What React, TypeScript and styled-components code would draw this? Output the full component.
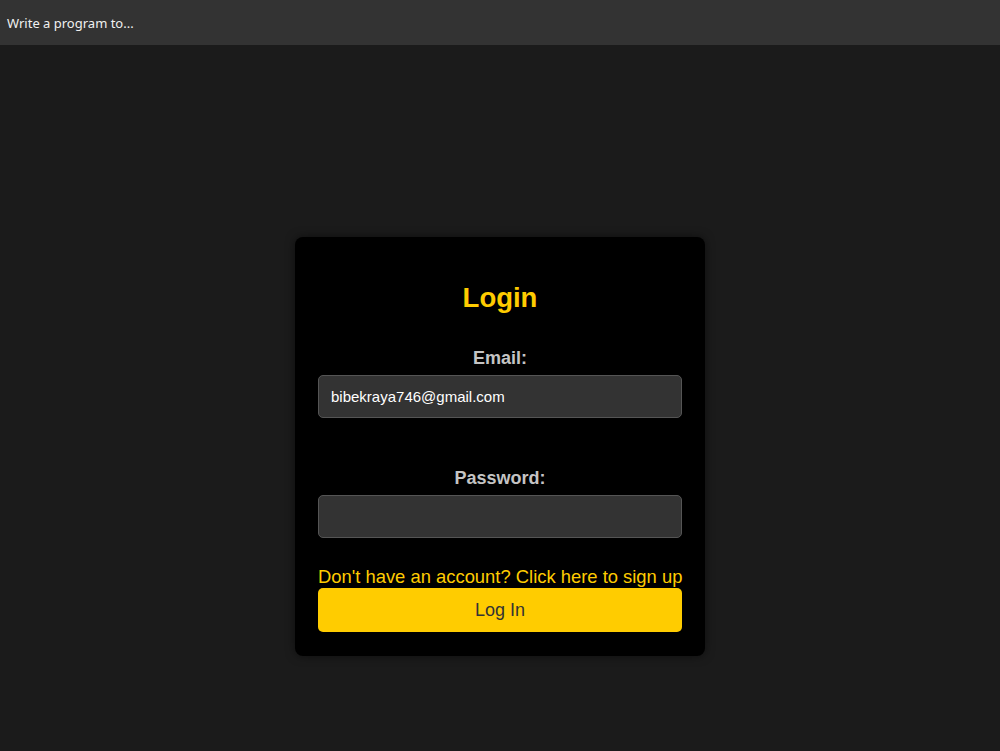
import React from 'react';
import styled, { createGlobalStyle } from 'styled-components';

const GlobalStyle = createGlobalStyle`
  body {
    margin: 0;
    background: #1b1b1b;
    font-family: "Liberation Sans", Arial, sans-serif;
  }
`

const TopBar = styled.div`
  height: 45px;
  background: #333333;
  display: flex;
  align-items: center;
  padding: 0 7px;
  color: #f0f0f0;
  font-family: "Noto Sans", "Open Sans", sans-serif;
  font-size: 13px;
`

const Main = styled.main`
  display: flex;
  justify-content: center;
  padding-top: 192px;
  min-height: 706px;
  box-sizing: border-box;
`

const Card = styled.form`
  width: 410px;
  box-sizing: border-box;
  background: #000;
  border-radius: 8px;
  box-shadow: 0 0 10px rgba(0, 0, 0, 0.5);
  padding: 22px 23px 24px;
  display: flex;
  flex-direction: column;
  align-self: flex-start;
`

const Title = styled.h2`
  margin: 24px 0 0;
  text-align: center;
  color: #ffcc00;
  font-size: 27.5px;
  line-height: 30px;
  font-weight: bold;
`

const Label = styled.label<{ $top: number }>`
  display: block;
  margin-top: ${p => p.$top}px;
  text-align: center;
  color: #c4c4c4;
  font-size: 18px;
  line-height: 21px;
  font-weight: bold;
`

const Input = styled.input`
  margin-top: 6px;
  height: 43px;
  box-sizing: border-box;
  width: 100%;
  background: #333333;
  border: 1px solid #555;
  border-radius: 5px;
  padding: 0 12px;
  color: #fff;
  font-family: "Liberation Sans", Arial, sans-serif;
  font-size: 15px;
  outline: none;
`

const SignUp = styled.a`
  margin-top: 28px;
  color: #ffcc00;
  font-size: 18.4px;
  line-height: 21px;
  text-decoration: none;
  white-space: nowrap;
`

const Button = styled.button`
  margin-top: 1px;
  height: 44px;
  width: 100%;
  border: none;
  border-radius: 5px;
  background: #ffcc00;
  color: #333;
  font-family: "Liberation Sans", Arial, sans-serif;
  font-size: 18px;
  cursor: pointer;
`

export default function App() {
  return (
    <>
      <GlobalStyle />
      <TopBar>Write a program to...</TopBar>
      <Main>
        <Card onSubmit={e => e.preventDefault()}>
          <Title>Login</Title>
          <Label $top={35}>Email:</Label>
          <Input type="email" defaultValue="bibekraya746@gmail.com" />
          <Label $top={50}>Password:</Label>
          <Input type="password" />
          <SignUp href="#">Don't have an account? Click here to sign up</SignUp>
          <Button type="submit">Log In</Button>
        </Card>
      </Main>
    </>
  );
}
